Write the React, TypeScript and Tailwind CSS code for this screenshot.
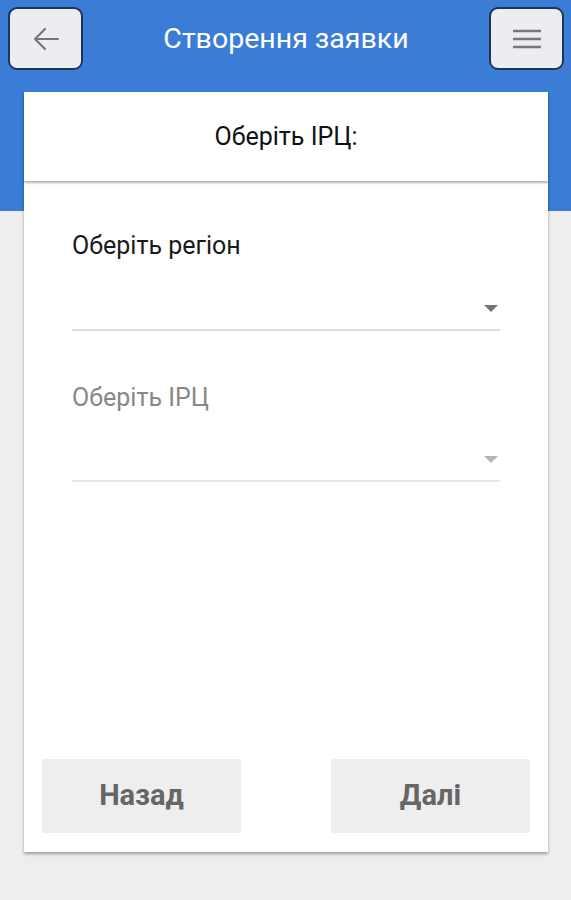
import React from "react";

function Arrow({ color }: { color: string }) {
  return (
    <svg width="14" height="8" viewBox="0 0 14 8" className="block">
      <path d="M0 0 L14 0 L7 7 Z" fill={color} />
    </svg>
  );
}

export default function App() {
  return (
    <div
      className="w-[571px] h-[900px] bg-[linear-gradient(to_bottom,#3b7dd6_211px,#eeeeee_211px)] overflow-hidden"
      style={{ fontFamily: "Roboto, 'Noto Sans', sans-serif" }}
    >
      <div className="flex items-center justify-between pt-[7px] pl-[8px] pr-[7px] h-[70px]">
        <button className="w-[75px] h-[63px] rounded-[9px] border-[2px] border-[#1e3556] bg-[#ebedf0] flex items-center justify-center">
          <svg width="30" height="26" viewBox="0 0 30 26" fill="none">
            <path d="M27 13 H4 M14 3 L4 13 L14 23" stroke="#777" strokeWidth="2.2" strokeLinecap="round" strokeLinejoin="round" />
          </svg>
        </button>
        <div className="text-white text-[28.5px] leading-none pt-[2px]">Створення заявки</div>
        <button className="w-[75px] h-[63px] rounded-[9px] border-[2px] border-[#1e3556] bg-[#ebedf0] flex items-center justify-center">
          <svg width="30" height="24" viewBox="0 0 30 24" fill="none">
            <path d="M1 4 H29 M1 12 H29 M1 20 H29" stroke="#777" strokeWidth="2.5" />
          </svg>
        </button>
      </div>
      <div className="ml-[24px] mt-[22px] w-[524px] h-[760px] bg-white shadow-[0_2px_3px_rgba(0,0,0,0.35)] flex flex-col">
        <div className="h-[89px] flex items-center justify-center text-[25px] text-[#111] shadow-[0_2px_2px_rgba(0,0,0,0.3)] relative z-10">
          Оберіть ІРЦ:
        </div>
        <div className="flex-1 flex flex-col px-[48px] pt-[52px]">
          <div className="text-[25px] text-[#1a1a1a] leading-none">Оберіть регіон</div>
          <div className="mt-[46px] h-[27px] border-b-[2px] border-[#dddddd] flex justify-end pr-[2px] pt-[1px]">
            <Arrow color="#757575" />
          </div>
          <div className="mt-[54px] text-[25px] text-[#888] leading-none">Оберіть ІРЦ</div>
          <div className="mt-[45px] h-[27px] border-b-[2px] border-[#e6e6e6] flex justify-end pr-[2px] pt-[1px]">
            <Arrow color="#b5b5b5" />
          </div>
        </div>
        <div className="flex justify-between px-[18px] pb-[19px]">
          <button className="w-[199px] h-[74px] bg-[#eeeeee] rounded-[2px] text-[29px] font-bold text-[#666]">Назад</button>
          <button className="w-[199px] h-[74px] bg-[#eeeeee] rounded-[2px] text-[29px] font-bold text-[#666]">Далі</button>
        </div>
      </div>
    </div>
  );
}
